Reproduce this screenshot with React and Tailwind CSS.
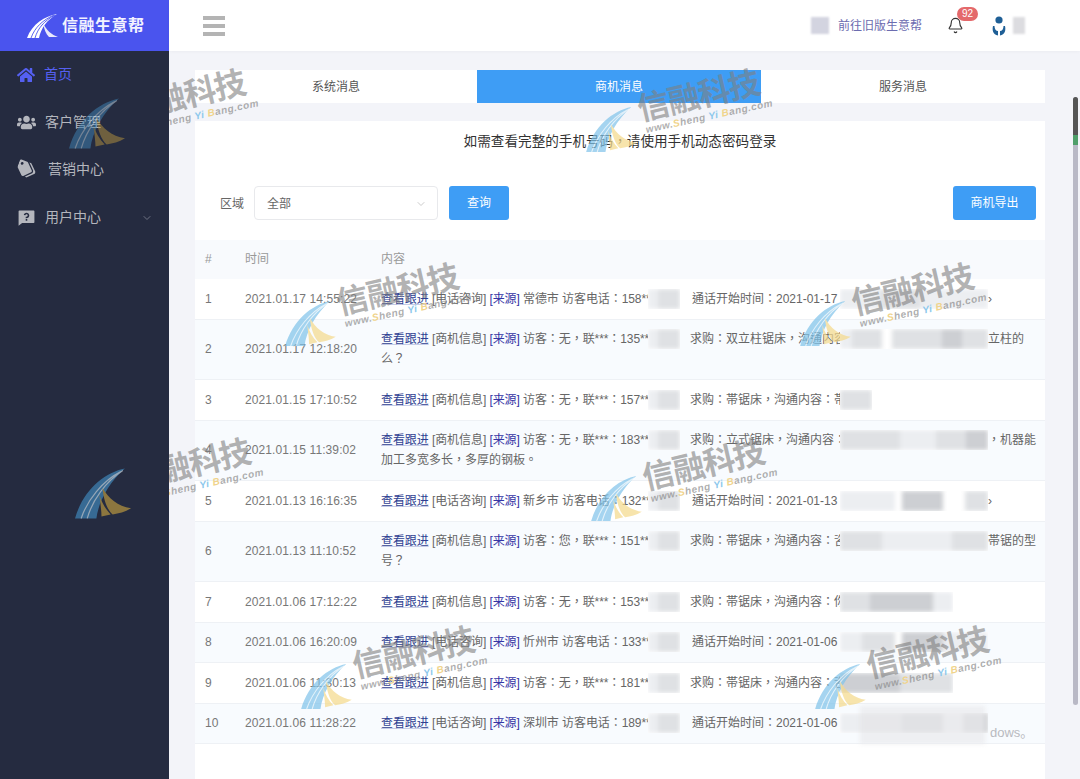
import { FaHome, FaUsers, FaTags } from "react-icons/fa";
import { RiQuestionnaireFill } from "react-icons/ri";
import { Bell, ChevronDown } from "lucide-react";

const FONT = "[font-family:'Liberation_Sans','Noto_Sans_CJK_SC',sans-serif]";
// 全角标点居中的字体
const FONT_TC = "[font-family:'Liberation_Sans','Noto_Sans_CJK_TC',sans-serif]";

const menu = [
  { name: "首页", Icon: FaHome, active: true, cls: "w-[18px] h-[18px]" },
  { name: "客户管理", Icon: FaUsers, cls: "w-[19px] h-[19px]" },
  { name: "营销中心", Icon: FaTags, cls: "w-[19px] h-[19px] rotate-[20deg]", ml: "ml-[12px]" },
  { name: "用户中心", Icon: RiQuestionnaireFill, cls: "w-[19px] h-[19px]", arrow: true },
];

// tone of each blurred block
const tone = {
  n: "bg-transparent",
  a: "bg-[#eceef1]",
  b: "bg-[#dfe1e4]",
  c: "bg-[#cdcfd3]",
};

const rows = [
  { id: 1, time: "2021.01.17 14:55:22", kind: "电话咨询", head: "常德市 访客电话：158**", mid: "通话开始时间：2021-01-17", midOff: "pl-[2px]",
    cells: [[40, "a"], [40, "b"], [68, "a"]], tail: "›" },
  { id: 2, time: "2021.01.17 12:18:20", kind: "商机信息", head: "访客：无，联***：135**", mid: "求购：双立柱锯床，沟通内容",
    cells: [[12, "a"], [30, "b"], [10, "n"], [50, "b"], [20, "c"], [26, "b"]], tail: "立柱的", second: "么？" },
  { id: 3, time: "2021.01.15 17:10:52", kind: "商机信息", head: "访客：无，联***：157**", mid: "求购：帯锯床，沟通内容：帯",
    cells: [[32, "b"]] },
  { id: 4, time: "2021.01.15 11:39:02", kind: "商机信息", head: "访客：无，联***：183**", mid: "求购：立式锯床，沟通内容：",
    cells: [[60, "b"], [36, "a"], [30, "b"], [22, "c"]], tail: "，机器能", second: "加工多宽多长，多厚的钢板。" },
  { id: 5, time: "2021.01.13 16:16:35", kind: "电话咨询", head: "新乡市 访客电话：132**", mid: "通话开始时间：2021-01-13", midOff: "pl-[2px]",
    cells: [[55, "a"], [7, "n"], [41, "c"], [22, "n"], [23, "b"]], tail: "›" },
  { id: 6, time: "2021.01.13 11:10:52", kind: "商机信息", head: "访客：您，联***：151**", mid: "求购：帯锯床，沟通内容：咨",
    cells: [[42, "b"], [30, "a"], [40, "a"], [36, "b"]], tail: "帯锯的型", second: "号？" },
  { id: 7, time: "2021.01.06 17:12:22", kind: "商机信息", head: "访客：无，联***：153**", mid: "求购：帯锯床，沟通内容：你",
    cells: [[30, "b"], [63, "c"], [20, "a"]] },
  { id: 8, time: "2021.01.06 16:20:09", kind: "电话咨询", head: "忻州市 访客电话：133**", mid: "通话开始时间：2021-01-06", midOff: "pl-[2px]",
    cells: [[22, "a"], [33, "b"], [7, "n"], [41, "c"], [45, "a"]] },
  { id: 9, time: "2021.01.06 11:30:13", kind: "商机信息", head: "访客：无，联***：181**", mid: "求购：帯锯床，沟通内容：咨",
    cells: [[60, "c"], [53, "b"]] },
  { id: 10, time: "2021.01.06 11:28:22", kind: "电话咨询", head: "深圳市 访客电话：189**", mid: "通话开始时间：2021-01-06", midOff: "pl-[2px]",
    cells: [[22, "a"], [40, "b"], [41, "c"], [20, "a"], [25, "c"]] },
];

const Blur = ({ cells }) => (
  <span className="relative block h-[20px] bg-white overflow-hidden shrink-0">
    <span className="flex h-[20px] blur-[2px]">
      {cells.map(([w, t], i) => (
        <span key={i} className={tone[t]} style={{ width: w }} />
      ))}
    </span>
  </span>
);

const SwooshLogo = ({ className, left = "#7fc3ea", right = "#f5d98a" }) => (
  <svg viewBox="0 0 56 50" className={className}>
    <path d="M50 1C30 5 9 22 1 50h21C24 34 34 15 50 1Z" fill={left} />
    <path d="M7 50C13 32 28 13 46 4M13 50C18 32 31 14 48 3" stroke="#fff" strokeWidth="1.2" fill="none" opacity=".7" />
    <path d="M28 20c1 12 5 22 10 26 6-1 12-2 18-6C43 38 34 30 28 20Z" fill={right} />
    <path d="M25 27c1 9 2 16 2 21l9-2c-5-5-9-12-11-19Z" fill={right} />
  </svg>
);

const Watermark = ({ className }) => (
  <div className={`absolute w-[200px] h-[70px] ${className}`}>
    <SwooshLogo className="absolute left-0 top-[38px] w-[56px] h-[46px] opacity-70" />
    <div className="absolute left-[55px] top-[26px] -rotate-[13deg] origin-left whitespace-nowrap text-[32px] tracking-[-1px] leading-none font-bold text-[#7f7f7f]/60">
      信融科技
    </div>
    <div className="absolute left-[63px] top-[57px] -rotate-[12deg] origin-left whitespace-nowrap text-[10px] leading-none font-bold italic tracking-[0.5px] text-[#8b8b8b]/70">
      www.<span className="text-[#f0d48c]">S</span>heng <span className="text-[#8cc8ec]">Yi</span> <span className="text-[#f0d48c]">B</span>ang.com
    </div>
  </div>
);

const Sidebar = () => (
  <aside className="w-[169px] shrink-0 bg-[#252b40]">
    <div className="h-[51px] bg-[#4a54ee] flex items-center pl-[26px] gap-[4px]">
      <svg viewBox="0 0 32 25" className="w-[32px] h-[25px]">
        <path d="M31 1C19 3 6 11 1 25h12C15 15 21 7 31 1Z" fill="#fff" />
        <path d="M5 25C9 14 17 7 28 2M9 25C12 15 18 8 29 2" stroke="#4a54ee" strokeWidth=".9" fill="none" />
        <path d="M17 10c1 6 3 11 6 14h9C26 22 20 17 17 10Z" fill="#e8e8fb" />
      </svg>
      <span className="text-[16px] font-bold tracking-[0.5px] text-[#f2f2ff] whitespace-nowrap">信融生意帮</span>
    </div>
    <nav>
      {menu.map(({ name, Icon, active, cls, arrow, ml }) => (
        <div key={name} className={`h-[47.6px] flex items-center pl-[17px] ${active ? "text-[#5560f2]" : "text-[#b4b6bd]"}`}>
          <Icon className={cls} />
          <span className={`${ml || "ml-[9px]"} text-[14px]`}>{name}</span>
          {arrow && <ChevronDown className="w-[12px] h-[12px] ml-auto mr-[16px] text-[#6e7283]" />}
        </div>
      ))}
    </nav>
  </aside>
);

const Header = () => (
  <header className="h-[51px] bg-white flex items-center pl-[34px] pr-[55px] shadow-[0_1px_3px_rgba(0,0,0,0.03)]">
    <div className="flex flex-col gap-[4px]">
      <div className="w-[22px] h-[4px] bg-[#b4b4b4]" />
      <div className="w-[22px] h-[4px] bg-[#b4b4b4]" />
      <div className="w-[22px] h-[4px] bg-[#b4b4b4]" />
    </div>
    <div className="ml-auto flex items-center">
      <div className="w-[18px] h-[17px] bg-[#d3d4e0] blur-[1px]" />
      <span className="ml-[9px] text-[12px] text-[#6c6cb0]">前往旧版生意帮</span>
      <div className="relative ml-[25px]">
        <Bell className="w-[17px] h-[17px] text-[#333]" strokeWidth={1.6} />
        <span className="absolute -top-[10px] left-[10px] w-[21px] h-[14px] rounded-full bg-[#e4696b] text-white text-[10px] leading-[14px] text-center">92</span>
      </div>
      <svg viewBox="0 0 14 20" className="ml-[28px] w-[14px] h-[20px]">
        <circle cx="7" cy="4" r="3.6" fill="#1f5f96" />
        <path d="M1 10c-1 4 0 9 5 9.500V15C4 15 2.500 13 2.500 10ZM13 10c1 4 0 9-5 9.500V15c2 0 3.500-2 3.500-5Z" fill="#1f5f96" />
      </svg>
      <div className="ml-[7px] w-[12px] h-[17px] bg-[#dcdce0] blur-[1px]" />
    </div>
  </header>
);

const Row = ({ row, even }) => (
  <div className={`flex py-[9.75px] border-b border-[#eef1f5] text-[12px] leading-[20px] ${even ? "bg-[#f8fbfe]" : "bg-white"}`}>
    <div className="w-[50px] pl-[10px] self-center text-[#777]">{row.id}</div>
    <div className="w-[136px] self-center text-[#777] tracking-[0.1px]">{row.time}</div>
    <div className={`flex-1 text-[#666] ${FONT_TC}`}>
      <div className="flex whitespace-nowrap">
        <span className="w-[267px] tracking-[-0.08px]">
          <span className="text-[#2f3f92] underline decoration-[#c5cbe6]">查看跟进</span> [{row.kind}] <span className="text-[#3535a5]">[来源]</span> {row.head}
        </span>
        <Blur cells={[[10, "a"], [22, "b"]]} />
        <span className={`w-[150px] ml-[10px] ${row.midOff || ""}`}>{row.mid}</span>
        <Blur cells={row.cells} />
        {row.tail && <span>{row.tail}</span>}
      </div>
      {row.second && <div>{row.second}</div>}
    </div>
  </div>
);

export default function App() {
  return (
    <div className={`relative w-[1080px] h-[779px] overflow-hidden flex bg-[#f3f4f9] ${FONT}`}>
      <Sidebar />
      <div className="relative flex-1 min-w-0 flex flex-col">
        <Header />
        <main className="pl-[26px] pr-[35px] pt-[19px] flex-1 flex flex-col">
          <div className="flex h-[33px] bg-white text-[12px] text-[#555] shrink-0">
            <div className="w-[282px] pt-[1px] flex items-center justify-center">系统消息</div>
            <div className="w-[284px] pt-[1px] flex items-center justify-center bg-[#3e9df5] text-white">商机消息</div>
            <div className="flex-1 pt-[1px] flex items-center justify-center">服务消息</div>
          </div>
          <section className="mt-[18px] flex-1 bg-white">
            <p className={`pt-[11px] text-center text-[13.6px] leading-[20px] text-[#333] ${FONT_TC}`}>如需查看完整的手机号码，请使用手机动态密码登录</p>
            <div className="mt-[34px] flex items-center pl-[25px] pr-[9px] h-[34px] text-[12px]">
              <span className="pt-[1px] text-[#666]">区域</span>
              <div className="ml-[10px] w-[184px] h-[34px] border border-[#e8e9ec] rounded-[4px] flex items-center pt-[1px] pl-[12px] pr-[10px] text-[#666]">
                全部
                <ChevronDown className="ml-auto w-[12px] h-[12px] text-[#ccc]" />
              </div>
              <button className="ml-[11px] w-[60px] h-[34px] rounded-[3px] bg-[#3e9df5] text-white">查询</button>
              <button className="ml-auto w-[83px] h-[34px] rounded-[3px] bg-[#3e9df5] text-white">商机导出</button>
            </div>
            <div className="mt-[20px] flex h-[39px] pb-[2px] items-center bg-[#f8fafd] text-[12px] text-[#999]">
              <div className="w-[50px] pl-[10px]">#</div>
              <div className="w-[136px]">时间</div>
              <div>内容</div>
            </div>
            {rows.map((row, i) => (
              <Row key={row.id} row={row} even={i % 2 === 1} />
            ))}
          </section>
        </main>
        {/* 水印，位置相对右侧内容区 */}
        <div className="absolute inset-0 overflow-hidden pointer-events-none">
          <Watermark className="-left-[100px] top-[68px]" />
          <Watermark className="-left-[95px] top-[437px]" />
          <Watermark className="left-[414px] top-[68px]" />
          <Watermark className="left-[113px] top-[262px]" />
          <Watermark className="left-[628px] top-[262px]" />
          <Watermark className="left-[419px] top-[437px]" />
          <Watermark className="left-[129px] top-[625px]" />
          <Watermark className="left-[643px] top-[625px]" />
          <div className="absolute left-[691px] top-[706px] w-[125px] h-[38px] bg-[#e9eaed]/70 blur-[2px]" />
          <span className="absolute left-[821px] top-[723px] text-[13px] text-[#b8bac0]">dows。</span>
        </div>
      </div>
      {/* 侧边栏上的水印 logo */}
      <SwooshLogo className="absolute left-[68px] top-[97px] w-[57px] h-[52px] opacity-50 pointer-events-none" left="#3f86b8" right="#b8963f" />
      <SwooshLogo className="absolute left-[74px] top-[467px] w-[57px] h-[52px] opacity-70 pointer-events-none" left="#3f86b8" right="#b8963f" />
      {/* 滚动条 */}
      <div className="absolute left-[1073px] top-[97px] w-[5px] h-[608px] rounded-full bg-[#b9b9c6] overflow-hidden pointer-events-none">
        <div className="h-[38px] bg-[#555]" />
        <div className="h-[10px] bg-[#4f9f6a]" />
      </div>
    </div>
  );
}
